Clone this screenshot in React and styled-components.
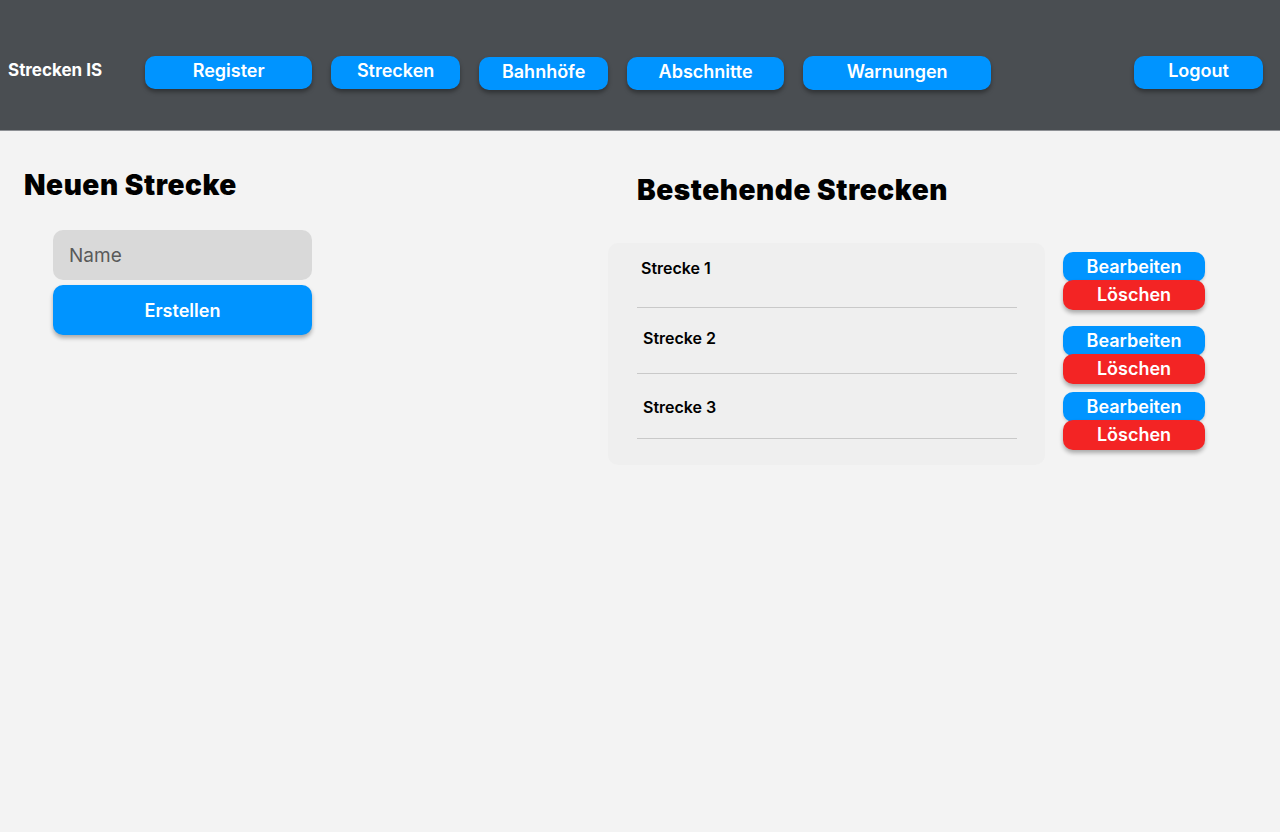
import React from "react";
import styled, { createGlobalStyle } from "styled-components";

const Global = createGlobalStyle`
  html, body { margin: 0; padding: 0; }
  body {
    background: #f3f3f3;
    font-family: Inter, "Noto Sans", sans-serif;
    -webkit-font-smoothing: antialiased;
  }
  * { box-sizing: border-box; }
`;

const Page = styled.div`
  min-height: 832px;
  background: #f3f3f3;
`;

const Header = styled.header`
  height: 131px;
  background: #4a4e52;
  border-bottom: 1px solid #8d9094;
  display: flex;
  align-items: flex-start;
  padding: 56px 17px 0 8px;
`;

const Logo = styled.div`
  color: #ffffff;
  font-size: 17px;
  font-weight: 700;
  line-height: 20px;
  padding-top: 4px;
  margin-right: 43px;
  white-space: nowrap;
`;

const NavButton = styled.button`
  width: ${(p) => p.$w}px;
  height: ${(p) => p.$h || 33}px;
  margin-top: ${(p) => p.$top || 0}px;
  margin-right: 19px;
  margin-left: ${(p) => (p.$push ? "auto" : "0")};
  border: none;
  border-radius: 10px;
  background: #0094ff;
  color: #ffffff;
  font-family: Inter, sans-serif;
  font-size: 18px;
  font-weight: 600;
  line-height: 1;
  padding: 0 0 3px;
  box-shadow: 0 3px 4px rgba(0, 0, 0, 0.35);
  cursor: pointer;
  &:last-child { margin-right: 0; }
`;

const Main = styled.main`
  display: flex;
  align-items: flex-start;
`;

const LeftSection = styled.section`
  width: 608px;
  padding: 37px 0 0 24px;
`;

const RightSection = styled.section`
  flex: 1;
  padding-top: 42px;
`;

const Heading = styled.h2`
  margin: 0;
  font-size: 28px;
  font-weight: 900;
  line-height: 34px;
  letter-spacing: 0.55px;
  color: #000;
  padding-left: ${(p) => p.$indent || 0}px;
`;

const Form = styled.form`
  width: 259px;
  margin: 28px 0 0 29px;
  display: flex;
  flex-direction: column;
  gap: 5px;
`;

const Input = styled.input`
  height: 50px;
  border: none;
  border-radius: 10px;
  background: #d9d9d9;
  padding: 0 16px;
  font-family: Inter, sans-serif;
  font-size: 19px;
  color: #333;
  outline: none;
  &::placeholder { color: #5a5a5a; }
`;

const SubmitButton = styled.button`
  height: 50px;
  border: none;
  border-radius: 10px;
  background: #0094ff;
  color: #fff;
  font-family: Inter, sans-serif;
  font-size: 18px;
  font-weight: 600;
  box-shadow: 0 3px 4px rgba(0, 0, 0, 0.3);
  cursor: pointer;
`;

const ListArea = styled.div`
  display: flex;
  align-items: flex-start;
  gap: 18px;
  margin-top: 36px;
`;

const Card = styled.div`
  width: 437px;
  background: #efefef;
  border-radius: 10px;
  padding: 0 28px 26px 29px;
`;

const Row = styled.div`
  padding: ${(p) => p.$pt}px 0 ${(p) => p.$pb}px ${(p) => p.$inset}px;
  border-bottom: 1px solid #c9c9c9;
  font-size: 16px;
  font-weight: 600;
  line-height: 20px;
  color: #000;
`;

const Actions = styled.div`
  display: flex;
  flex-direction: column;
  padding-top: 9px;
`;

const ActionGroup = styled.div`
  display: flex;
  flex-direction: column;
  margin-top: ${(p) => p.$gap}px;
`;

const ActionButton = styled.button`
  width: 142px;
  height: 30px;
  border: none;
  border-radius: 10px;
  background: ${(p) => (p.$danger ? "#f32424" : "#0094ff")};
  color: #fff;
  font-family: Inter, sans-serif;
  font-size: 18px;
  font-weight: 600;
  line-height: 1;
  padding: 0 0 1px;
  margin-top: ${(p) => (p.$danger ? "-2px" : "0")};
  box-shadow: ${(p) =>
    p.$danger ? "0 3px 4px rgba(0,0,0,0.3)" : "0 2px 3px rgba(0,0,0,0.15)"};
  position: relative;
  z-index: ${(p) => (p.$danger ? 1 : 0)};
  cursor: pointer;
`;

const navItems = [
  { label: "Register", w: 167 },
  { label: "Strecken", w: 129 },
  { label: "Bahnhöfe", w: 129, top: 1 },
  { label: "Abschnitte", w: 157, top: 1 },
  { label: "Warnungen", w: 188, h: 34 },
];

const strecken = [
  { name: "Strecke 1", inset: 4, pt: 15, pb: 29, gap: 0 },
  { name: "Strecke 2", inset: 6, pt: 20, pb: 25, gap: 16 },
  { name: "Strecke 3", inset: 6, pt: 23, pb: 21, gap: 8 },
];

export default function App() {
  return (
    <Page>
      <Global />
      <Header>
        <Logo>Strecken IS</Logo>
        {navItems.map((n) => (
          <NavButton key={n.label} $w={n.w} $h={n.h} $top={n.top}>
            {n.label}
          </NavButton>
        ))}
        <NavButton $w={129} $push>
          Logout
        </NavButton>
      </Header>
      <Main>
        <LeftSection>
          <Heading>Neuen Strecke</Heading>
          <Form onSubmit={(e) => e.preventDefault()}>
            <Input placeholder="Name" />
            <SubmitButton type="submit">Erstellen</SubmitButton>
          </Form>
        </LeftSection>
        <RightSection>
          <Heading $indent={29}>Bestehende Strecken</Heading>
          <ListArea>
            <Card>
              {strecken.map((s) => (
                <Row key={s.name} $inset={s.inset} $pt={s.pt} $pb={s.pb}>
                  {s.name}
                </Row>
              ))}
            </Card>
            <Actions>
              {strecken.map((s) => (
                <ActionGroup key={s.name} $gap={s.gap}>
                  <ActionButton>Bearbeiten</ActionButton>
                  <ActionButton $danger>Löschen</ActionButton>
                </ActionGroup>
              ))}
            </Actions>
          </ListArea>
        </RightSection>
      </Main>
    </Page>
  );
}
